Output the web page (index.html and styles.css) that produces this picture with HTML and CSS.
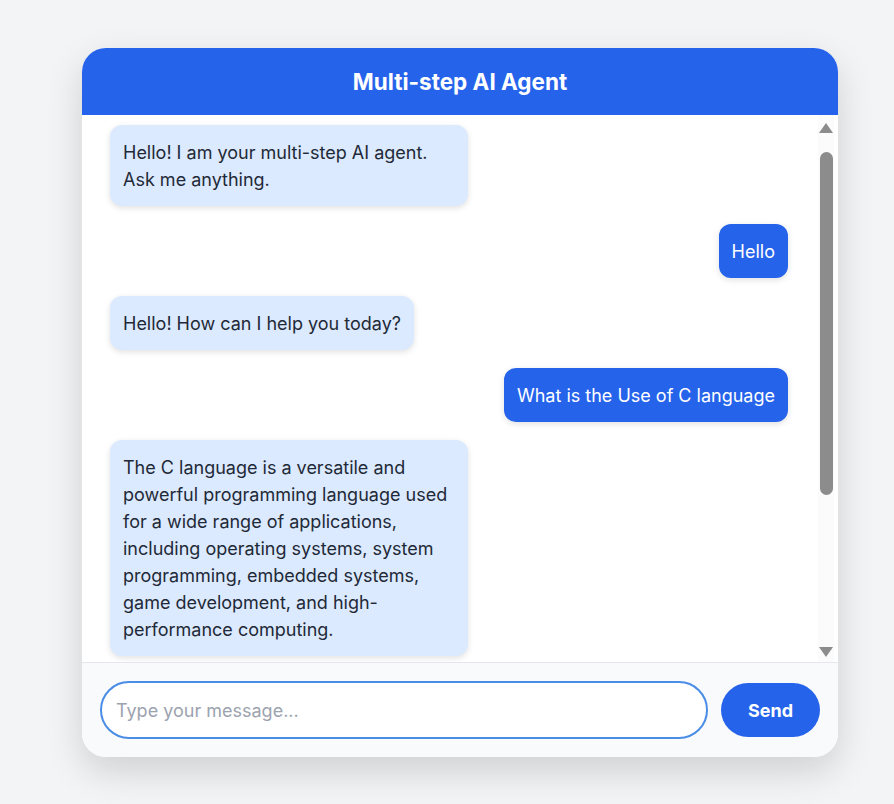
FILE: index.html
```html
<!DOCTYPE html>
<html lang="en">
<head>
<meta charset="utf-8">
<title>Multi-step AI Agent</title>
<link rel="stylesheet" href="styles.css">
</head>
<body>
<div class="chat">
  <header class="chat-header"><h1>Multi-step AI Agent</h1></header>
  <div class="chat-body">
    <div class="messages">
      <div class="msg bot">Hello! I am your multi-step AI agent. Ask me anything.</div>
      <div class="msg user">Hello</div>
      <div class="msg bot">Hello! How can I help you today?</div>
      <div class="msg user">What is the Use of C language</div>
      <div class="msg bot">The C language is a versatile and powerful programming language used for a wide range of applications, including operating systems, system programming, embedded systems, game development, and high-performance computing.</div>
    </div>
    <div class="scrollbar" aria-hidden="true">
      <div class="arrow up"></div>
      <div class="track"><div class="thumb"></div></div>
      <div class="arrow down"></div>
    </div>
  </div>
  <form class="composer">
    <input class="composer-input" type="text" placeholder="Type your message..." autofocus>
    <button class="send" type="button">Send</button>
  </form>
</div>
</body>
</html>
```
FILE: styles.css
```css
* { box-sizing: border-box; }
html, body { margin: 0; padding: 0; }
body {
  background: #f3f4f6;
  font-family: Inter, "Noto Sans", sans-serif;
  color: #1f2937;
  padding: 48px 0 0 82px;
  height: 804px;
  overflow: hidden;
}
.chat {
  width: 756px;
  height: 709px;
  background: #fff;
  border-radius: 24px;
  box-shadow: 0 14px 36px rgba(0,0,0,0.15);
  display: flex;
  flex-direction: column;
  overflow: hidden;
}
.chat-header {
  background: #2563eb;
  height: 67px;
  display: flex;
  align-items: center;
  justify-content: center;
  flex: none;
}
.chat-header h1 {
  margin: 0;
  color: #fff;
  font-size: 22.5px;
  font-weight: 700;
}
.chat-body {
  flex: 1;
  min-height: 0;
  display: flex;
}
.messages {
  flex: 1;
  overflow: hidden;
  padding: 10px 30px 0 28px;
  display: flex;
  flex-direction: column;
  gap: 18px;
}
.msg {
  max-width: 358px;
  padding: 13.5px 13px;
  border-radius: 12px;
  font-size: 18px;
  line-height: 27px;
  box-shadow: 0 2px 6px rgba(0,0,0,0.12);
  flex: none;
}
.msg.bot {
  align-self: flex-start;
  background: #dbeafe;
  color: #1f2937;
}
.msg.user {
  align-self: flex-end;
  background: #2563eb;
  color: #fff;
}
.scrollbar {
  flex: none;
  width: 16px;
  margin-right: 4px;
  background: #fbfbfb;
  display: flex;
  flex-direction: column;
  align-items: center;
  padding: 7px 0 5px;
}
.arrow {
  width: 0;
  height: 0;
  border-left: 7px solid transparent;
  border-right: 7px solid transparent;
  flex: none;
}
.arrow.up { border-bottom: 10px solid #8c8c8c; margin-top: 1px; }
.arrow.down { border-top: 10px solid #8c8c8c; }
.track {
  flex: 1;
  width: 100%;
  display: flex;
  justify-content: center;
  padding: 19px 0 0;
}
.thumb {
  width: 13px;
  height: 343px;
  border-radius: 7px;
  background: #8c8c8c;
}
.composer {
  flex: none;
  margin: 0;
  height: 95px;
  border-top: 1px solid #e5e7eb;
  background: #f9fafb;
  display: flex;
  align-items: center;
  gap: 13px;
  padding: 0 18px;
}
.composer-input {
  flex: 1;
  height: 58px;
  border: 2px solid #4a8de6;
  border-radius: 29px;
  padding: 0 14px;
  font-family: Inter, "Noto Sans", sans-serif;
  font-size: 18px;
  color: #1f2937;
  background: #fff;
  outline: none;
  caret-color: #111;
}
.composer-input::placeholder { color: #9ca3af; }
.send {
  width: 99px;
  height: 54px;
  border: none;
  border-radius: 27px;
  background: #2563eb;
  color: #fff;
  font-family: Inter, "Noto Sans", sans-serif;
  font-size: 18px;
  font-weight: 700;
}
```
